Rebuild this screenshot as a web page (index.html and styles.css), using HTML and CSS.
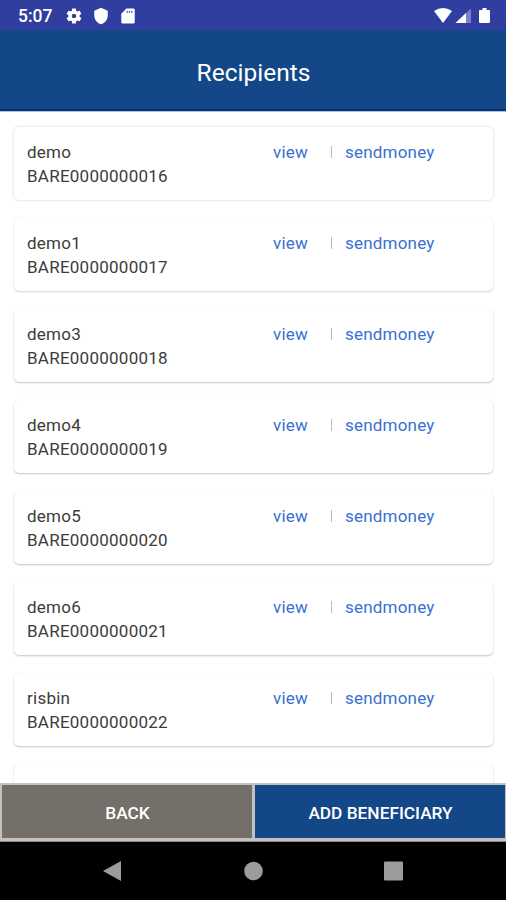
FILE: index.html
```html
<!DOCTYPE html>
<html lang="en">
<head>
<meta charset="utf-8">
<title>Recipients</title>
<link rel="stylesheet" href="styles.css">
</head>
<body>
<div class="screen">
  <div class="status">
    <span class="time">5:07</span>
    <svg class="gear" width="18" height="18" viewBox="0 0 24 24"><path fill="#fff" fill-rule="evenodd" d="M19.4 13a7.500 7.500 0 0 0 0-2l2.100-1.600a.5.5 0 0 0 .1-.6l-2-3.500a.5.5 0 0 0-.6-.2l-2.500 1a7.300 7.300 0 0 0-1.700-1L14.400 2.400A.5.5 0 0 0 14 2h-4a.5.5 0 0 0-.5.4L9.200 5.100a7.300 7.300 0 0 0-1.700 1l-2.500-1a.5.5 0 0 0-.6.2l-2 3.500a.5.5 0 0 0 .1.600L4.600 11a7.500 7.500 0 0 0 0 2l-2.100 1.600a.5.5 0 0 0-.1.600l2 3.500c.1.200.4.300.6.200l2.500-1c.5.400 1.100.7 1.700 1l.3 2.700c0 .2.200.4.500.4h4c.2 0 .4-.2.5-.4l.4-2.700a7.300 7.300 0 0 0 1.700-1l2.500 1c.2.100.5 0 .6-.2l2-3.500a.5.5 0 0 0-.1-.6zM12 15a3 3 0 1 1 0-6 3 3 0 0 1 0 6z"/></svg>
    <svg class="shield" width="18" height="18" viewBox="0 0 24 24"><path fill="#fff" d="M12 1 3 5v6c0 5.500 3.800 10.700 9 12 5.200-1.300 9-6.500 9-12V5z"/></svg>
    <svg class="sd" width="18" height="18" viewBox="0 0 24 24"><path fill="#fff" d="M19 2h-9L3 9v11c0 1.100.9 2 2 2h14c1.100 0 2-.9 2-2V4c0-1.100-.9-2-2-2z"/><path fill="#7780c4" d="M10 5h2v3h-2zM13 5h2v3h-2zM16 5h2v3h-2z"/></svg>
    <svg class="signals" width="58" height="18" viewBox="0 0 58 18"><path fill="#fff" d="M1 4Q10-2 19 4L10 16z"/><path fill="#7b82c8" d="M38 1.500v14.500H22.500z"/><path fill="#fff" d="M33 6v10H22.500z"/><path fill="#fff" d="M47 3h2.500V1h4v2H56q1 0 1 1v11q0 1-1 1h-9q-1 0-1-1V4q0-1 1-1z"/></svg>
  </div>
  <header>Recipients</header>
  <main>
    <section class="card"><div class="person">demo<br>BARE0000000016</div><a class="view">view</a><i></i><a class="send">sendmoney</a></section>
    <section class="card"><div class="person">demo1<br>BARE0000000017</div><a class="view">view</a><i></i><a class="send">sendmoney</a></section>
    <section class="card"><div class="person">demo3<br>BARE0000000018</div><a class="view">view</a><i></i><a class="send">sendmoney</a></section>
    <section class="card"><div class="person">demo4<br>BARE0000000019</div><a class="view">view</a><i></i><a class="send">sendmoney</a></section>
    <section class="card"><div class="person">demo5<br>BARE0000000020</div><a class="view">view</a><i></i><a class="send">sendmoney</a></section>
    <section class="card"><div class="person">demo6<br>BARE0000000021</div><a class="view">view</a><i></i><a class="send">sendmoney</a></section>
    <section class="card"><div class="person">risbin<br>BARE0000000022</div><a class="view">view</a><i></i><a class="send">sendmoney</a></section>
    <section class="card"></section>
  </main>
  <footer><button class="back">BACK</button><button class="add">ADD BENEFICIARY</button></footer>
  <nav>
    <svg width="506" height="58" viewBox="0 0 506 58" fill="#9c9c9c"><path d="M103 29 121 19V39z"/><circle cx="253.500" cy="29" r="9.300"/><rect x="384" y="19.500" width="19" height="19" rx="1"/></svg>
  </nav>
</div>
</body>
</html>
```
FILE: styles.css
```css
* { box-sizing: border-box; }
body { margin: 0; font-family: Roboto, sans-serif; background: #fff; }
.screen { width: 506px; height: 900px; display: flex; flex-direction: column; overflow: hidden; }
.status { flex: none; height: 30px; background: #303f9f; display: flex; align-items: center; padding: 2px 15px 0 18px; color: #fff; }
.time { width: 47px; font-size: 17.500px; font-weight: 500; }
.shield { margin-left: 9px; }
.sd { margin-left: 9px; }
.signals { margin-left: auto; }
header { flex: none; height: 82px; background: #134788; border-bottom: 1px solid #aebfdd; box-shadow: inset 0 -2px #063579; color: #fff; font-size: 24.500px; line-height: 86px; text-align: center; padding-left: 1px; }
main { flex: 1; min-height: 0; overflow: hidden; padding: 15px 13px 0 14px; display: flex; flex-direction: column; gap: 18px; }
.card { flex: none; height: 73px; border-radius: 5px; background: #fff; box-shadow: 0 1px 2px rgba(0,0,0,.23), 0 0 1px rgba(0,0,0,.06); display: flex; align-items: flex-start; padding: 13px 0 0 13px; font-size: 17px; line-height: 24px; letter-spacing: .2px; color: #3c3c3c; }
.card:first-child { box-shadow: 0 0 3px rgba(0,0,0,.2); }
.card:nth-child(2) { box-shadow: 0 1px 2px rgba(0,0,0,.17), 0 0 2px rgba(0,0,0,.06); }
.person { width: 246px; letter-spacing: .25px; }
.card a { color: #3970d2; }
.view { width: 58px; }
.card i { width: 1px; height: 12px; margin: 6px 13px 0 0; background: #bbb; }
footer { flex: none; height: 59px; display: grid; grid-template-columns: 250px 250px; gap: 3px; padding: 2px 1px 3px 2px; background: #c4c1c1; border-bottom: 1px solid #888; }
button { border: 0; padding: 2px 0 0 1px; font: 500 17.300px Roboto, sans-serif; color: #fff; }
.back { background: #746f69; }
.add { background: #134788; }
nav { flex: none; height: 58px; background: #000; }
nav svg { display: block; }
```
